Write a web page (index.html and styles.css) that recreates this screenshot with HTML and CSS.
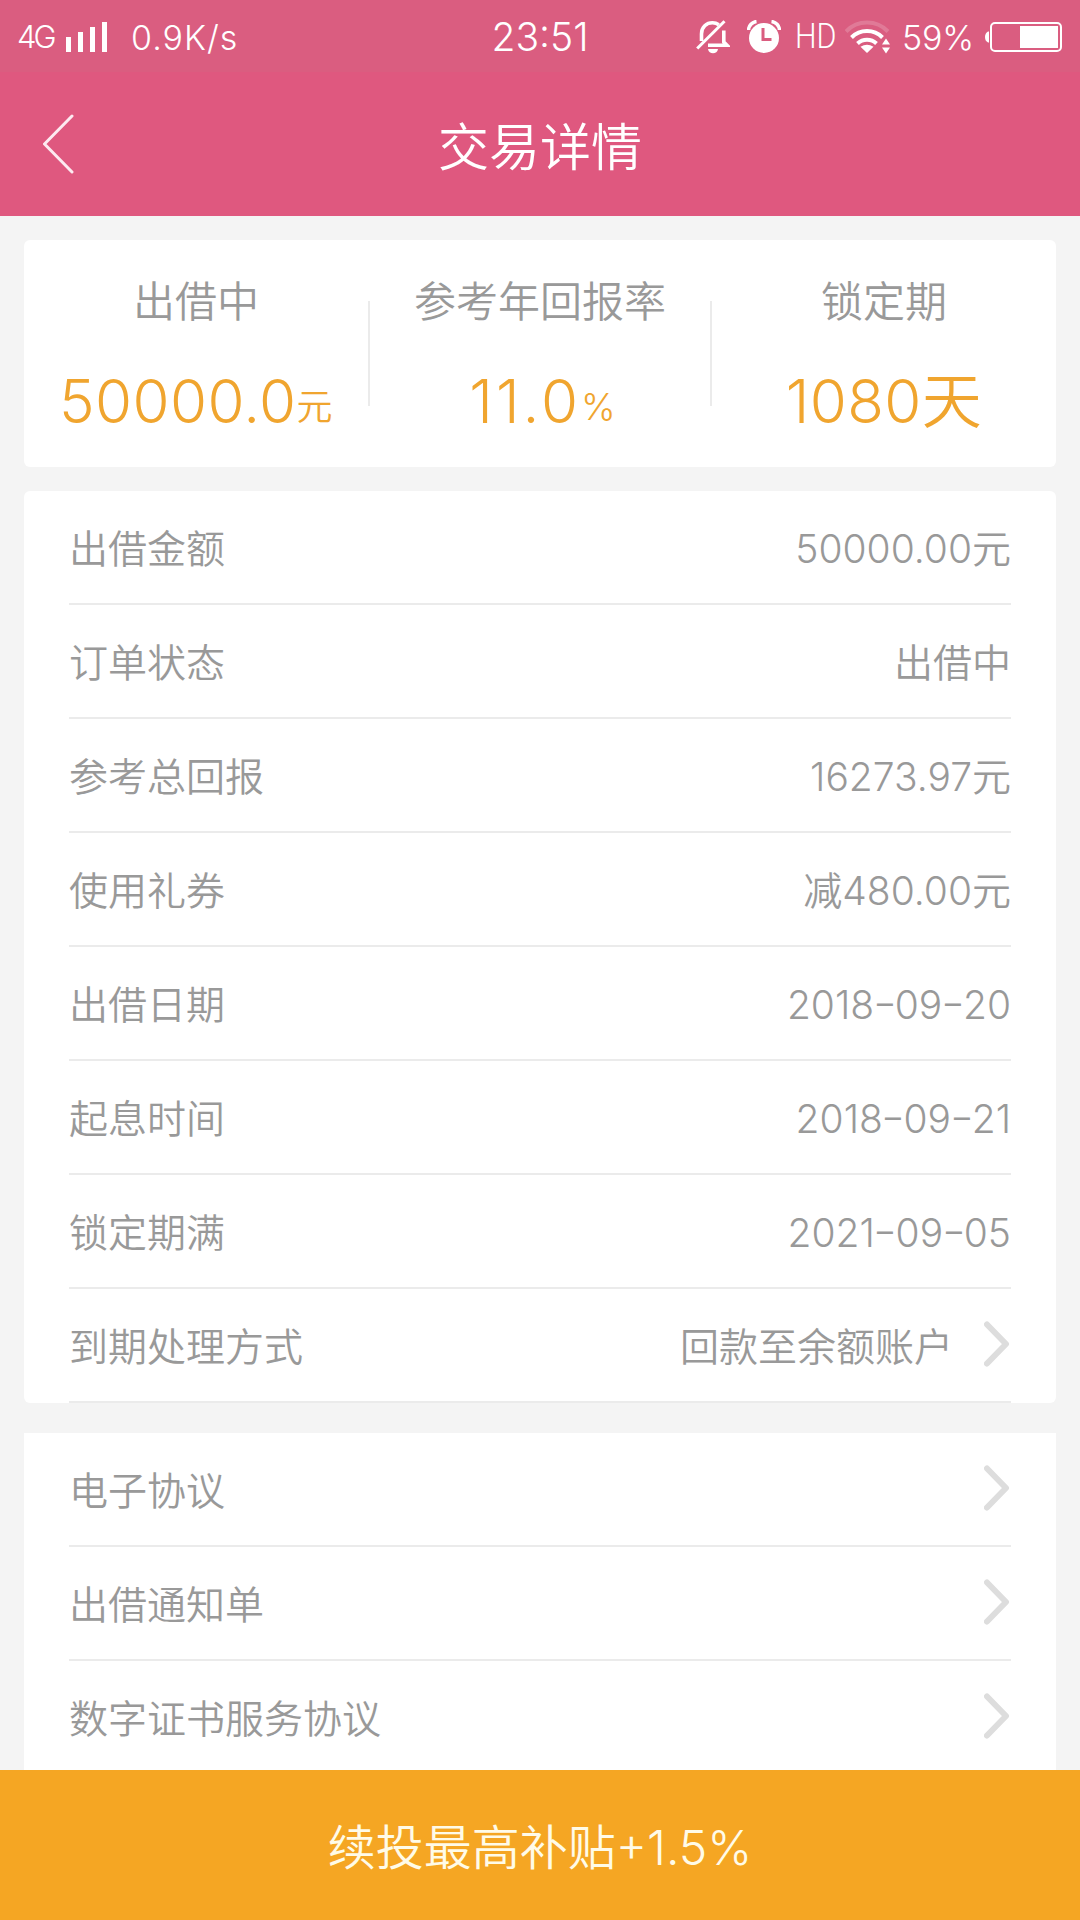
FILE: index.html
```
<!DOCTYPE html>
<html lang="zh-CN">
<head>
    <meta charset="UTF-8">
    <meta name="viewport" content="width=device-width, initial-scale=1.0">
    <title>交易详情</title>
    <link rel="stylesheet" href="styles.css">
</head>
<body>
    <div class="status-bar">
        <div class="status-left">
            <span class="network">4G</span>
            <svg class="signal" width="42" height="30" viewBox="0 0 42 30" fill="#fff">
                <rect x="0" y="15" width="5" height="15"/>
                <rect x="12" y="10" width="5" height="20"/>
                <rect x="24" y="5" width="5" height="25"/>
                <rect x="36" y="0" width="5" height="30"/>
            </svg>
            <span class="speed">0.9K/s</span>
        </div>
        <div class="clock">23:51</div>
        <div class="status-right">
            <svg class="bell" width="34" height="34" viewBox="0 0 34 34" fill="none" stroke="#fff" stroke-width="3.6">
                <path d="M5.5 21V14C5.5 7 10.500 2.800 16.500 2.800C19 2.800 21 3.500 22.800 4.700"/>
                <path d="M27.800 10.500V22L31 25.200H12"/>
                <path d="M1.200 28.500L28.500 1.200" stroke-width="3"/>
                <path d="M12 29H22C21.500 32 19.500 33.300 17 33.300S12.500 32 12 29Z" fill="#fff" stroke="none"/>
            </svg>
            <svg class="alarm" width="34" height="34" viewBox="0 0 34 34">
                <circle cx="17" cy="18" r="15" fill="#fff"/>
                <path d="M1.500 10A9 9 0 0 1 9.500 1.500M32.500 10A9 9 0 0 0 24.500 1.500" fill="none" stroke="#fff" stroke-width="3.500"/>
                <path d="M16 8V19.500H24.500" fill="none" stroke="#da5d80" stroke-width="3"/>
            </svg>
            <span class="hd">HD</span>
            <svg class="wifi" width="46" height="34" viewBox="0 0 46 34" fill="none" stroke="#fff" stroke-width="4">
                <path d="M1 11.500A29 29 0 0 1 43 11.500" opacity=".18"/>
                <path d="M6.500 17.500A22 22 0 0 1 37.500 17.500"/>
                <path d="M12.500 23.500A14 14 0 0 1 31.500 23.500"/>
                <path d="M22 33L15.500 26.800Q22 22.500 28.500 26.800Z" fill="#fff" stroke="none"/>
                <path d="M41 18.500L45 24.500H37ZM41 33.500L45 27.500H37Z" fill="#fff" stroke="none"/>
            </svg>
            <span class="percent">59%</span>
            <svg class="battery" width="78" height="30" viewBox="0 0 78 30">
                <path d="M4 9.500H3Q0 11 0 15T3 20.500H4Z" fill="#fff"/>
                <rect x="6" y="1" width="70" height="28" rx="4" fill="none" stroke="#fff" stroke-width="2"/>
                <rect x="35" y="4" width="38" height="22" fill="#fff"/>
            </svg>
        </div>
    </div>

    <header>
        <svg class="back" width="32" height="60" viewBox="0 0 32 60" fill="none" stroke="#fdeaf1" stroke-width="3" stroke-linecap="round" stroke-linejoin="round">
            <path d="M29 2L1.500 30L29 58"/>
        </svg>
        <h1>交易详情</h1>
    </header>

    <main>
        <section class="summary">
            <div class="summary-item">
                <div class="summary-label">出借中</div>
                <div class="summary-value">50000.0<small>元</small></div>
            </div>
            <div class="summary-item">
                <div class="summary-label">参考年回报率</div>
                <div class="summary-value rate">11.0<small>%</small></div>
            </div>
            <div class="summary-item">
                <div class="summary-label">锁定期</div>
                <div class="summary-value">1080天</div>
            </div>
        </section>

        <ul class="list details">
            <li><span>出借金额</span><span class="value">50000.00元</span></li>
            <li><span>订单状态</span><span class="value">出借中</span></li>
            <li><span>参考总回报</span><span class="value">16273.97元</span></li>
            <li><span>使用礼券</span><span class="value">减480.00元</span></li>
            <li><span>出借日期</span><span class="value date">2018<i>-</i>09<i>-</i>20</span></li>
            <li><span>起息时间</span><span class="value date">2018<i>-</i>09<i>-</i>21</span></li>
            <li><span>锁定期满</span><span class="value date">2021<i>-</i>09<i>-</i>05</span></li>
            <li>
                <span>到期处理方式</span>
                <span class="value">回款至余额账户</span>
                <svg class="arrow" width="27" height="46" viewBox="0 0 27 46"><path d="M3 3.500L22 23L3 42.500"/></svg>
            </li>
        </ul>

        <ul class="list agreements">
            <li>
                <span>电子协议</span>
                <svg class="arrow" width="27" height="46" viewBox="0 0 27 46"><path d="M3 3.500L22 23L3 42.500"/></svg>
            </li>
            <li>
                <span>出借通知单</span>
                <svg class="arrow" width="27" height="46" viewBox="0 0 27 46"><path d="M3 3.500L22 23L3 42.500"/></svg>
            </li>
            <li>
                <span>数字证书服务协议</span>
                <svg class="arrow" width="27" height="46" viewBox="0 0 27 46"><path d="M3 3.500L22 23L3 42.500"/></svg>
            </li>
        </ul>
    </main>

    <footer class="renew">续投最高补贴+1.5%</footer>
</body>
</html>
```

FILE: styles.css
```
* {
    box-sizing: border-box;
}

body {
    display: flex;
    flex-direction: column;
    height: 1920px;
    margin: 0;
    overflow: hidden;
    background-color: #f4f4f4;
    color: #999;
    font-family: Inter, "Noto Sans CJK SC", sans-serif;
    font-size: 39px;
    font-weight: 350;
}

svg {
    display: block;
    flex: none;
}

.status-bar {
    display: grid;
    grid-template-columns: 1fr auto 1fr;
    align-items: center;
    flex: none;
    height: 72px;
    padding: 0 17px 0 17px;
    background-color: #da5d80;
    color: #fff;
    font-size: 34px;
    line-height: 72px;
    white-space: nowrap;
}

.status-left,
.status-right {
    display: flex;
    align-items: center;
}

.status-right {
    justify-content: flex-end;
}

.network {
    width: 49px;
    font-size: 31px;
    letter-spacing: -3px;
}

.speed {
    margin-left: 23px;
    padding-top: 2px;
    letter-spacing: 1px;
}

.clock {
    font-size: 39px;
}

.bell {
    margin-right: 17px;
}

.hd {
    width: 49px;
    margin-left: 14px;
    font-family: Roboto, sans-serif;
    font-size: 35px;
    font-weight: 300;
    transform: scaleX(0.87);
    transform-origin: left;
}

.wifi {
    margin-left: 1px;
}

.percent {
    width: 83px;
    margin-left: 11px;
    padding-top: 2px;
    letter-spacing: -0.2px;
}

header {
    display: grid;
    grid-template-columns: 32px 1fr 32px;
    align-items: center;
    flex: none;
    height: 144px;
    padding: 0 43px;
    background-color: #df587f;
    color: #fff;
}

header h1 {
    margin: 0;
    font-size: 51px;
    font-weight: 350;
    text-align: center;
}

main {
    flex: 1;
    min-height: 0;
    padding: 24px 24px 0;
    overflow: hidden;
}

.summary {
    display: grid;
    grid-template-columns: 344px 342px 1fr;
    height: 227px;
    margin-bottom: 24px;
    border-radius: 6px;
    background-color: #fff;
    text-align: center;
    white-space: nowrap;
}

.summary-item {
    position: relative;
    padding-top: 32px;
}

.summary-item + .summary-item {
    padding-left: 2px;
}

.summary-item + .summary-item::before {
    content: "";
    position: absolute;
    left: 0;
    top: 61px;
    width: 2px;
    height: 105px;
    background-color: #ebebeb;
}

.summary-label {
    font-size: 42px;
    line-height: 60px;
}

.summary-value {
    margin-top: 29px;
    color: #f0a52f;
    font-size: 60px;
    line-height: 80px;
    letter-spacing: 0.4px;
}

.summary-value small {
    font-size: 36px;
    vertical-align: 3px;
}

.summary-value.rate {
    padding-left: 5px;
    letter-spacing: 3px;
}

.rate small {
    font-size: 37px;
    letter-spacing: 0;
}

.list {
    margin: 0;
    padding: 0 45px;
    list-style: none;
    background-color: #fff;
}

.details {
    margin-bottom: 30px;
    border-radius: 6px;
}

.list li {
    display: flex;
    align-items: center;
    height: 114px;
    padding-top: 4px;
    border-bottom: 2px solid #ebebeb;
    line-height: 60px;
}

.value {
    margin-left: auto;
}

.date {
    font-feature-settings: "case";
}

/* wider dash between date parts */
.date i {
    display: inline-block;
    margin: 0 1.5px;
    font-style: normal;
    transform: scaleX(1.35);
}

.arrow {
    margin: 0 0 6px auto;
    fill: none;
    stroke: #ddd;
    stroke-width: 6;
    stroke-linecap: round;
    stroke-linejoin: round;
}

.value + .arrow {
    margin-left: 31px;
}

.renew {
    flex: none;
    height: 150px;
    padding-top: 2px;
    background-color: #f5a623;
    color: #fffbe8;
    font-size: 48px;
    line-height: 152px;
    text-align: center;
}
```
